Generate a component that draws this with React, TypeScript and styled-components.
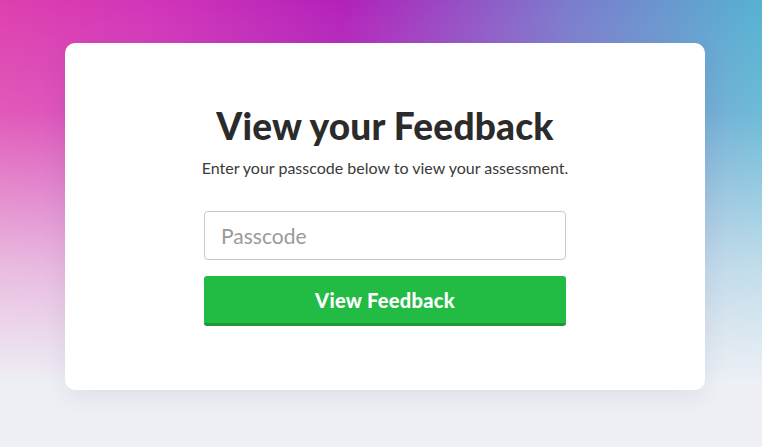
import React from 'react';
import styled, { createGlobalStyle } from 'styled-components';

const GlobalStyle = createGlobalStyle`
	html, body {
		margin: 0;
		padding: 0;
		height: 100%;
	}
	body {
		font-family: 'Lato', 'Noto Sans', sans-serif;
		background: #eef0f5;
	}
	#root {
		height: 100%;
	}
`;

const Page = styled.div`
	min-height: 447px;
	box-sizing: border-box;
	padding: 43px 0 0 8px;
	display: flex;
	justify-content: center;
	align-items: flex-start;
	background:
		linear-gradient(180deg, rgba(238, 240, 245, 0) 0%, rgba(238, 240, 245, 0.15) 25%, rgba(238, 240, 245, 0.7) 60%, #eef0f5 86%),
		linear-gradient(90deg, #de3fae 0%, #d234b9 20%, #b321b9 45%, #9a48c4 58%, #7a7ccc 75%, #56b2d2 100%);
`;

const Card = styled.div`
	width: 640px;
	height: 347px;
	box-sizing: border-box;
	background: #fff;
	border-radius: 10px;
	box-shadow: 0 8px 24px rgba(40, 50, 80, 0.08);
	display: flex;
	flex-direction: column;
	align-items: center;
	padding-top: 61px;
`;

const Title = styled.h1`
	margin: 0;
	font-size: 37px;
	line-height: 44px;
	font-weight: 900;
	color: #2b2b2b;
	letter-spacing: 0.2px;
`;

const Subtitle = styled.p`
	margin: 10px 0 0;
	font-size: 16px;
	line-height: 20px;
	color: #3a3a3a;
`;

const Form = styled.form`
	width: 362px;
	margin-top: 33px;
	display: flex;
	flex-direction: column;
	gap: 16px;
`;

const Input = styled.input`
	height: 49px;
	box-sizing: border-box;
	border: 1px solid #c9c9c9;
	border-radius: 4px;
	padding: 0 16px;
	font-family: inherit;
	font-size: 21px;
	color: #333;
	outline: none;

	&::placeholder {
		color: #9a9a9a;
	}
`;

const Button = styled.button`
	height: 50px;
	box-sizing: border-box;
	border: none;
	border-bottom: 3px solid #1a9a31;
	border-radius: 3px;
	background: #22bc45;
	color: #fff;
	font-family: inherit;
	font-size: 20px;
	font-weight: 900;
	letter-spacing: 0.3px;
	padding-top: 2px;
	cursor: pointer;
`;

const App = () => {
	return (
		<>
			<GlobalStyle />
			<Page>
				<Card>
					<Title>View your Feedback</Title>
					<Subtitle>Enter your passcode below to view your assessment.</Subtitle>
					<Form onSubmit={(e) => e.preventDefault()}>
						<Input type="password" placeholder="Passcode" />
						<Button type="submit">View Feedback</Button>
					</Form>
				</Card>
			</Page>
		</>
	);
};

export default App;
